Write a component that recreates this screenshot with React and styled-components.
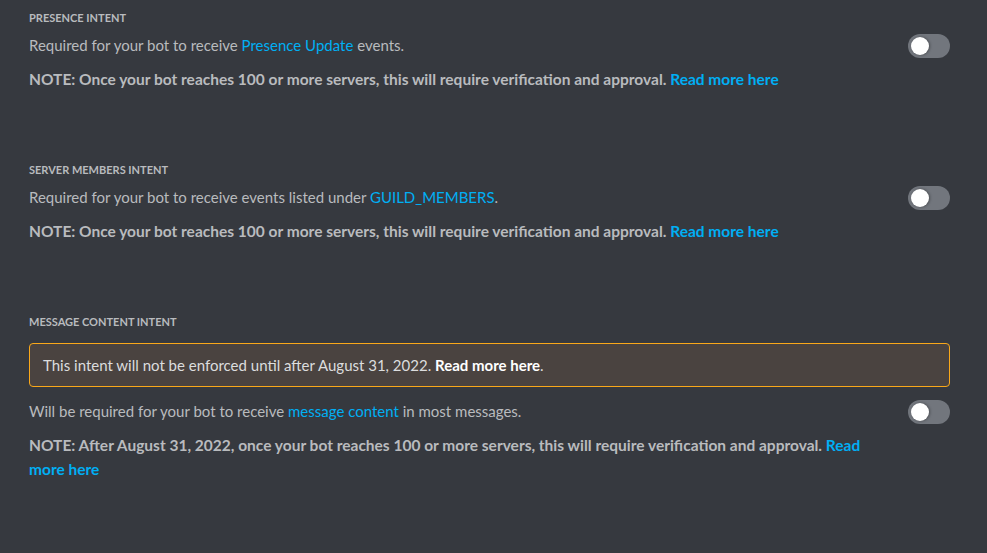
import React from "react";
import styled, { createGlobalStyle } from "styled-components";

const GlobalStyle = createGlobalStyle`
  html, body {
    margin: 0;
    padding: 0;
    background: #36393f;
  }
  body {
    font-family: Lato, "Open Sans", sans-serif;
  }
`;

const intents = [
  {
    id: "presence",
    title: "Presence Intent",
    before: "Required for your bot to receive ",
    link: "Presence Update",
    after: " events.",
    note: "NOTE: Once your bot reaches 100 or more servers, this will require verification and approval.",
  },
  {
    id: "members",
    title: "Server Members Intent",
    before: "Required for your bot to receive events listed under ",
    link: "GUILD_MEMBERS",
    after: ".",
    note: "NOTE: Once your bot reaches 100 or more servers, this will require verification and approval.",
  },
  {
    id: "message",
    title: "Message Content Intent",
    warning: "This intent will not be enforced until after August 31, 2022.",
    before: "Will be required for your bot to receive ",
    link: "message content",
    after: " in most messages.",
    note: "NOTE: After August 31, 2022, once your bot reaches 100 or more servers, this will require verification and approval.",
  },
];

const Toggle = () => (
  <Track>
    <Knob />
  </Track>
);

const App = () => {
  return (
    <Page>
      <GlobalStyle />
      {intents.map((intent) => (
        <Section key={intent.id}>
          <Title>{intent.title}</Title>
          {intent.warning && (
            <Warning>
              <span>
                {intent.warning} <strong>Read more here</strong>.
              </span>
            </Warning>
          )}
          <Row>
            <Body>
              <Description>
                {intent.before}
                <Link>{intent.link}</Link>
                {intent.after}
              </Description>
              <Note>
                {intent.note} <Link>Read more here</Link>
              </Note>
            </Body>
            <Toggle />
          </Row>
        </Section>
      ))}
    </Page>
  );
};

export default App;

const Page = styled.div`
  padding: 10px 37px 40px 29px;
  display: flex;
  flex-direction: column;
  gap: 71px;
`;

const Section = styled.section`
  display: flex;
  flex-direction: column;
`;

const Title = styled.h5`
  margin: 0 0 9px;
  font-size: 11px;
  line-height: 16px;
  font-weight: 700;
  text-transform: uppercase;
  color: #b9bbbe;
  letter-spacing: 0;
`;

const Warning = styled.div`
  margin: 4px 0 14px;
  height: 44px;
  box-sizing: border-box;
  display: flex;
  align-items: center;
  padding: 0 13px;
  border: 1px solid #faa81a;
  border-radius: 4px;
  background: #4a4340;
  color: #dcddde;
  font-size: 15px;

  strong {
    color: #ffffff;
    font-weight: 700;
  }
`;

const Row = styled.div`
  display: flex;
  align-items: flex-start;
  justify-content: space-between;
`;

const Body = styled.div`
  flex: 1;
  max-width: 845px;
`;

const Description = styled.div`
  font-size: 15px;
  line-height: 20px;
  color: #b9bbbe;
`;

const Note = styled.div`
  margin-top: 12px;
  font-size: 15.5px;
  line-height: 24px;
  font-weight: 700;
  color: #b9bbbe;
`;

const Link = styled.span`
  color: #00aff4;
`;

const Track = styled.div`
  position: relative;
  width: 42px;
  height: 24px;
  border-radius: 12px;
  background: #72767d;
  flex-shrink: 0;
  margin-top: -1px;
`;

const Knob = styled.div`
  position: absolute;
  top: 3px;
  left: 3px;
  width: 18px;
  height: 18px;
  border-radius: 50%;
  background: #ffffff;
  box-shadow: 1px 0 3px rgba(0, 0, 0, 0.35);
`;
